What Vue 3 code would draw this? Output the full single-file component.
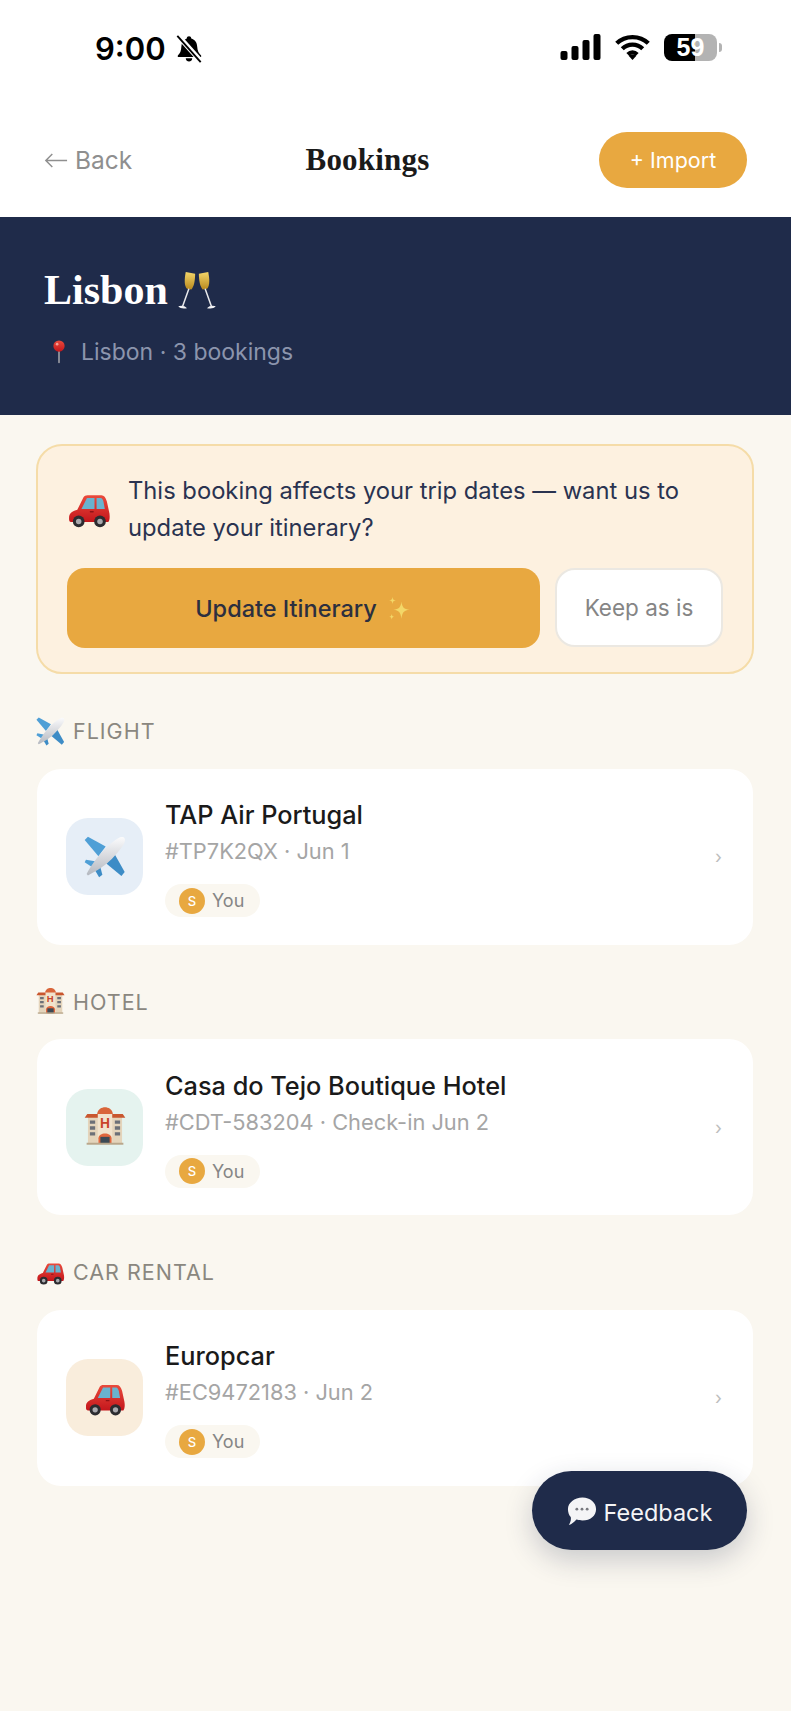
<template>
  <div class="page">
    <!-- emoji artwork, reused below -->
    <svg class="defs" aria-hidden="true">
      <defs>
        <linearGradient id="gBody" x1="0" y1="0" x2="0" y2="1"><stop offset="0" stop-color="#fbfbfc" /><stop offset="1" stop-color="#b4b8c0" /></linearGradient>
        <linearGradient id="gRed" x1="0" y1="0" x2="0" y2="1"><stop offset="0" stop-color="#ea4b3c" /><stop offset="1" stop-color="#c4161c" /></linearGradient>
        <linearGradient id="gGold" x1="0" y1="0" x2="0" y2="1"><stop offset="0" stop-color="#f4d66a" /><stop offset="1" stop-color="#b98a1e" /></linearGradient>
      </defs>
      <symbol id="plane" viewBox="0 0 64 64">
        <path d="M33 16 6 1 1 6 22 31Z" fill="#4f9fd6" />
        <path d="M47 28 62 55 57 61 34 42Z" fill="#3d8cc6" />
        <path d="M19 39 3 36 1 40 15 49Z" fill="#4f9fd6" />
        <path d="M24 44 28 59 23 63 15 49Z" fill="#3d8cc6" />
        <path d="M55 2C60 0 64 3 62 9 60 15 50 28 38 39 30 47 14 56 6 60L4 58C8 50 18 35 26 26 36 15 48 5 55 2Z" fill="url(#gBody)" />
      </symbol>
      <symbol id="car" viewBox="0 0 64 64">
        <path d="M3 45C3 37 9 35 15 33L24 15C25 13 27 12 30 12L50 12C54 12 56 15 58 21L61 35C63 42 62 49 60 51L6 51C3 51 3 48 3 45Z" fill="url(#gRed)" />
        <path d="M21 32 29 16 40 16 40 32ZM43 16 49 16C51 16 52 18 53 21L55 32 43 32Z" fill="#69b3cf" />
        <rect x="33" y="35" width="6" height="2" rx="1" fill="#8e1216" />
        <circle cx="17" cy="50" r="8.5" fill="#2c2c30" /><circle cx="17" cy="50" r="4" fill="#a9a9ae" />
        <circle cx="48" cy="50" r="8.5" fill="#2c2c30" /><circle cx="48" cy="50" r="4" fill="#a9a9ae" />
      </symbol>
      <symbol id="hotel" viewBox="0 0 64 64">
        <rect x="6" y="16" width="52" height="42" fill="#e4d4bb" />
        <path d="M1 18 5 12 59 12 63 18Z" fill="#c9572f" />
        <path d="M21 58V12C21 6 27 3 32 3S43 6 43 12V58Z" fill="#f1e3cd" />
        <path d="M20 12C21 5 27 2 32 2S43 5 44 12Z" fill="#d9653a" />
        <path fill="#6c7078" d="M9 22h8v5H9zM9 31h8v5H9zM9 40h8v5H9zM47 22h8v5h-8zM47 31h8v5h-8zM47 40h8v5h-8z" />
        <path d="M22 58V49C22 45 27 42 32 42S42 45 42 49V58Z" fill="#e0673d" />
        <rect x="25" y="47" width="14" height="11" fill="#3c4a55" />
        <rect x="4" y="56" width="56" height="3" fill="#b9a78b" />
      </symbol>
      <symbol id="flutes" viewBox="0 0 64 64">
        <path d="M14 3 29 6C29 17 27 27 23 31L16 30C11 25 12 13 14 3Z" fill="url(#gGold)" />
        <path d="M50 3 35 6C35 17 37 27 41 31L48 30C53 25 52 13 50 3Z" fill="url(#gGold)" />
        <path d="M19 30 9 58M45 30 55 58" stroke="#e9e9ec" stroke-width="2.4" fill="none" />
        <path d="M2 58C6 56 13 57 16 61 11 62 5 62 2 58ZM62 58C58 56 51 57 48 61 53 62 59 62 62 58Z" fill="#f1f1f3" />
      </symbol>
      <symbol id="pin" viewBox="0 0 64 64">
        <rect x="30" y="22" width="4" height="40" rx="2" fill="#a8a8ad" />
        <circle cx="32" cy="16" r="15" fill="url(#gRed)" />
        <circle cx="27" cy="11" r="3.5" fill="#f4a096" />
      </symbol>
      <symbol id="sparkles" viewBox="0 0 64 64">
        <path d="M38 14C40 28 44 32 58 34 44 36 40 40 38 56 36 40 32 36 18 34 32 32 36 28 38 14Z" fill="#f3d768" />
        <path d="M16 2C17 9 18 10 24 11 18 12 17 13 16 20 15 13 14 12 8 11 14 10 15 9 16 2Z" fill="#f3d768" />
        <path d="M14 44C15 49 16 50 20 51 16 52 15 53 14 58 13 53 12 52 8 51 12 50 13 49 14 44Z" fill="#f3d768" />
      </symbol>
      <symbol id="bubble" viewBox="0 0 64 64">
        <path d="M33 3C50 3 62 14 62 28 62 42 50 52 33 52 28 52 24 51 20 50 16 55 10 60 4 62 8 56 9 50 8 45 4 40 2 34 2 28 2 14 16 3 33 3Z" fill="#f4f4f6" />
        <circle cx="21" cy="28" r="3" fill="#77787e" /><circle cx="32" cy="28" r="3" fill="#77787e" /><circle cx="43" cy="28" r="3" fill="#77787e" />
      </symbol>
    </svg>

    <header class="top">
      <div class="status">
        <div class="status-left">
          <span class="clock">9:00</span>
          <svg class="bell" viewBox="0 0 30 30">
            <path d="M15 2C16.500 2 17.300 3 17.400 4.200 21.500 5.300 23.500 8.500 23.800 13 24 17.500 25.500 20 28 22.600V24H3V22.600C5.500 20 6.600 17.500 6.800 13 7 8.500 9 5.300 12.600 4.200 12.700 3 13.500 2 15 2Z" fill="#000" />
            <path d="M11.500 25.500H18.500C18.300 27.700 16.800 29 15 29S11.700 27.700 11.500 25.500Z" fill="#000" />
            <path d="M3 1 28 29" stroke="#fff" stroke-width="5.500" />
            <path d="M2.500 1.500 27.500 29.500" stroke="#000" stroke-width="2" />
          </svg>
        </div>
        <div class="status-right">
          <svg class="signal" viewBox="0 0 40 26">
            <rect x="0" y="17" width="7" height="9" rx="2" /><rect x="11" y="12" width="7" height="14" rx="2" />
            <rect x="22" y="6" width="7" height="20" rx="2" /><rect x="33" y="0" width="7" height="26" rx="2" />
          </svg>
          <svg class="wifi" viewBox="0 0 38 28">
            <path d="M2 10C11 1 27 1 36 10" /><path d="M8 16C14 10 24 10 30 16" /><path d="M14 22C17 19 21 19 24 22" />
            <path class="dot" d="M19 28 14.800 23.500C17 21.500 21 21.500 23.200 23.500Z" />
          </svg>
          <div class="battery"><span class="batt-cell">59</span><i class="nub"></i></div>
        </div>
      </div>

      <nav class="bar">
        <button class="back">
          <svg class="arrow" viewBox="0 0 26 16"><path d="M25 8H2M9 1 2 8l7 7" /></svg>
          Back
        </button>
        <h1>Bookings</h1>
        <button class="import">+ Import</button>
      </nav>
    </header>

    <section class="hero">
      <h2>Lisbon <svg class="flutes"><use href="#flutes" /></svg></h2>
      <p><svg class="pin"><use href="#pin" /></svg>Lisbon · 3 bookings</p>
    </section>

    <main class="content">
      <div class="banner">
        <div class="banner-msg">
          <svg class="banner-car"><use href="#car" /></svg>
          <p>This booking affects your trip dates — want us to update your itinerary?</p>
        </div>
        <div class="banner-actions">
          <button class="update">Update Itinerary <svg class="sparkles"><use href="#sparkles" /></svg></button>
          <button class="keep">Keep as is</button>
        </div>
      </div>

      <section v-for="b in bookings" :key="b.id" class="group">
        <div class="label">
          <svg class="label-icon" viewBox="0 0 64 64">
            <use :href="'#' + b.icon" />
            <text v-if="b.icon === 'hotel'" x="32" y="33" class="hotel-h">H</text>
          </svg>
          {{ b.label }}
        </div>
        <div class="card">
          <div class="tile" :class="b.icon">
            <svg viewBox="0 0 64 64">
              <use :href="'#' + b.icon" />
              <text v-if="b.icon === 'hotel'" x="32" y="33" class="hotel-h">H</text>
            </svg>
          </div>
          <div class="info">
            <div class="name">{{ b.name }}</div>
            <div class="ref">{{ b.ref }}</div>
            <div class="chip"><span class="avatar">S</span>You</div>
          </div>
          <span class="chev">›</span>
        </div>
      </section>
    </main>

    <button class="feedback"><svg><use href="#bubble" /></svg><span>Feedback</span></button>
  </div>
</template>

<script setup>
const bookings = [
  { id: 1, icon: "plane", label: "FLIGHT", name: "TAP Air Portugal", ref: "#TP7K2QX · Jun 1" },
  { id: 2, icon: "hotel", label: "HOTEL", name: "Casa do Tejo Boutique Hotel", ref: "#CDT-583204 · Check-in Jun 2" },
  { id: 3, icon: "car", label: "CAR RENTAL", name: "Europcar", ref: "#EC9472183 · Jun 2" },
];
</script>

<style>
body{margin:0;background:#faf7f0}
</style>

<style scoped>
.page{position:relative;width:791px;height:1711px;overflow:hidden;background:#faf7f0;font-family:Inter,"Noto Sans",sans-serif;color:#1a1a1a}
.defs{position:absolute;width:0;height:0}
button{font-family:inherit;cursor:pointer}

.top{background:#fff;height:217px}
.status{height:96px;display:flex;justify-content:space-between;padding:0 69px 0 95px;box-sizing:border-box}
.status-left{display:flex;align-items:center;gap:9px;height:96px}
.clock{font-size:31px;font-weight:600;color:#000}
.bell{width:28px;height:29px}
.status-right{display:flex;align-items:center;gap:13px;height:94px}
.signal{width:41px;height:26px;fill:#000}
.wifi{width:37px;height:26px}
.wifi path{fill:none;stroke:#000;stroke-width:4.6}
.wifi .dot{fill:#000;stroke:none}
.battery{display:flex;align-items:center;gap:2px}
.batt-cell{width:53px;height:27px;border-radius:8px;background:linear-gradient(90deg,#000 0 59%,#b3b3b3 59% 100%);color:#fff;font:700 25px/27px "Liberation Sans",sans-serif;text-align:center}
.nub{width:3px;height:9px;background:#b3b3b3;border-radius:0 3px 3px 0}

.bar{display:flex;align-items:center;justify-content:space-between;padding:36px 44px 0}
.back{display:flex;align-items:center;gap:7px;width:92px;padding:0;background:none;border:0;font-size:24.500px;color:#8f8f8f;white-space:nowrap}
.arrow{flex:none;width:24px;height:15px;fill:none;stroke:#8f8f8f;stroke-width:1.600}
.bar h1{margin:0;font:700 31px "Liberation Serif",serif;color:#1a1a1a;letter-spacing:.2px}
.import{width:148px;height:56px;border:0;border-radius:28px;background:#e8a840;color:#fff;font-size:21.500px;font-weight:400}

.hero{height:198px;box-sizing:border-box;padding:50px 44px 0;background:#1f2b4a;color:#fff}
.hero h2{margin:0;display:flex;align-items:center;gap:9px;height:46px;font:700 42px "Liberation Serif",serif}
.flutes{width:40px;height:46px}
.hero p{margin:24px 0 0;display:flex;align-items:center;height:30px;font-size:23px;color:#8c95ad}
.pin{width:24px;height:28px;margin:0 10px 0 3px}

.content{padding:29px 37px 0 36px}
.banner{box-sizing:border-box;height:230px;padding:26px 29px 0;border:2px solid #f5dca8;border-radius:26px;background:#fdf1e0}
.banner-msg{display:flex;align-items:center;gap:17px}
.banner-car{flex:none;width:44px;height:44px}
.banner-msg p{margin:0;font-size:23.750px;line-height:37px;color:#2a3350}
.banner-actions{display:flex;gap:15px;margin-top:22px}
.update{flex:1;display:flex;align-items:center;justify-content:center;gap:9px;height:80px;border:0;border-radius:18px;background:#e8a840;color:#2c2f3f;font-size:23.500px;font-weight:500;padding-top:2px}
.sparkles{width:26px;height:26px}
.keep{width:168px;height:79px;box-sizing:border-box;border:2px solid #ebe8e2;border-radius:20px;background:#fff;color:#858585;font-size:22.500px;font-weight:400}

.group{margin-top:44px}
.label{display:flex;align-items:center;gap:8px;height:26px;margin-bottom:24.500px;font-size:21.500px;font-weight:400;letter-spacing:1px;color:#8a877f}
.label-icon{width:29px;height:29px}
.hotel-h{font:700 21px "Liberation Sans",sans-serif;text-anchor:middle;fill:#c9452a}
.card{display:flex;align-items:center;box-sizing:border-box;height:176px;padding:0 31px 0 29px;margin:0 1px;border-radius:24px;background:#fff}
.tile{flex:none;display:flex;align-items:center;justify-content:center;width:77px;height:77px;border-radius:22px}
.tile svg{width:42px;height:42px}
.tile.plane{background:#e6eef7}
.tile.hotel{background:#e5f3ef}
.tile.car{background:#f9eddc}
.info{flex:1;margin-left:22px;padding-bottom:3px}
.name{font-size:25.300px;font-weight:500;line-height:32px;color:#1a1a1a}
.ref{margin-top:7px;font-size:21.800px;line-height:26px;color:#a5a5a5}
.chip{display:inline-flex;align-items:center;gap:7px;height:33px;margin-top:20px;margin-bottom:-6px;padding:0 16px 0 14px;border-radius:17px;background:#faf7f0;font-size:18px;color:#858585}
.avatar{display:flex;align-items:center;justify-content:center;width:26px;height:26px;border-radius:50%;background:#e8a840;color:#fff;font-size:13px;font-weight:500}
.chev{font-size:18px;color:#bdbdbd}

.feedback{position:absolute;left:532px;top:1471px;display:flex;align-items:center;justify-content:center;gap:7px;width:215px;height:79px;padding:0;border:0;border-radius:40px;background:#1f2b4a;color:#f4f4f6;font-size:23.500px;font-weight:400;box-shadow:0 10px 28px rgba(31,43,74,.22)}
.feedback span{padding-top:3px}
.feedback svg{width:30px;height:30px}
</style>
